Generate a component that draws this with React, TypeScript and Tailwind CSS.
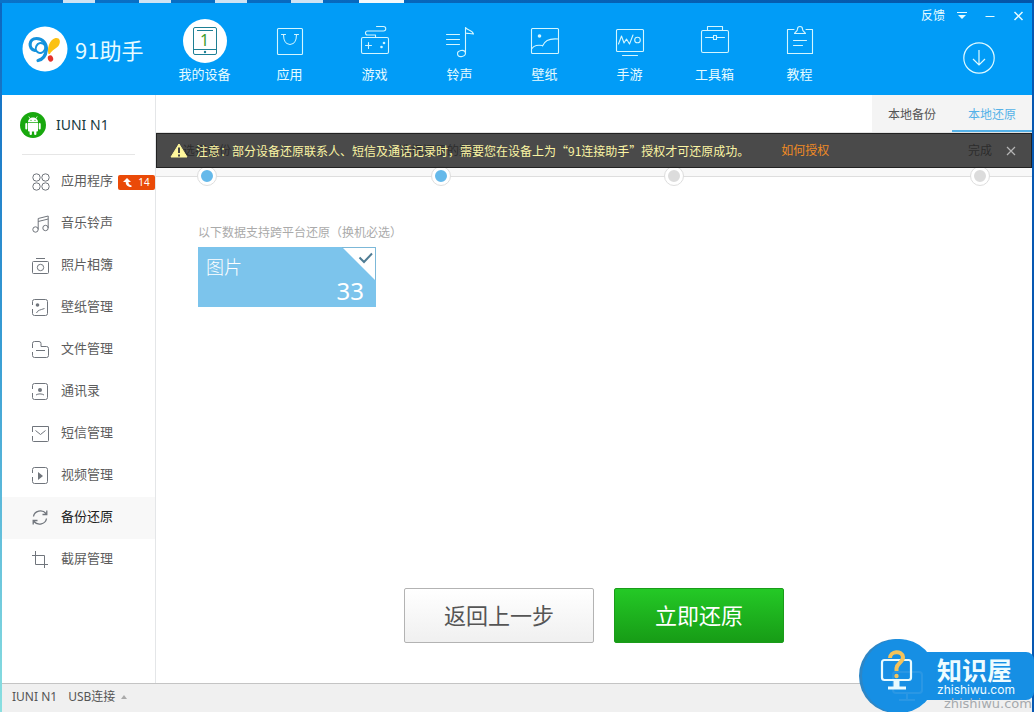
import type { ReactNode } from "react";

function NavSvg({ children }: { children: ReactNode }) {
  return (
    <svg width="44" height="44" viewBox="0 0 44 44" fill="none" stroke="#d4f6ff" strokeWidth="1.1" strokeLinecap="round" strokeLinejoin="round" aria-hidden="true">
      {children}
    </svg>
  );
}

const navItems: { label: string; icon: ReactNode }[] = [
  {
    label: "我的设备",
    icon: (
      <span className="relative flex size-11 items-center justify-center rounded-full bg-white">
        <svg className="absolute inset-0" width="44" height="44" viewBox="0 0 44 44" fill="none" stroke="#1d7f94" aria-hidden="true">
          <rect x="10.5" y="8.5" width="23" height="27" rx="1.5" />
          <path d="M14 11.5h16M10.500 30.500h23" />
          <circle cx="22" cy="33" r="1.200" fill="#1d7f94" stroke="none" />
        </svg>
        <span className="relative -mt-0.5 text-base leading-none text-[#3f9d2c]">1</span>
      </span>
    ),
  },
  {
    label: "应用",
    icon: (
      <NavSvg>
        <rect x="9.500" y="9.500" width="25" height="26" rx="1" />
        <path d="M13.500 15.500h4M26.500 15.500h4M15.500 15.500c0 6 2.500 10 6.500 10s6.500-4 6.500-10" />
      </NavSvg>
    ),
  },
  {
    label: "游戏",
    icon: (
      <NavSvg>
        <rect x="8.500" y="18.500" width="27" height="16" rx="1.500" />
        <path d="M22.500 18v-2h-8a2 2 0 0 1 0-4h16a2 2 0 0 0 0-4.500h-7M12.500 26.500h6M15.500 23.500v6" />
        <g fill="#d4f6ff" stroke="none"><circle cx="28.500" cy="28" r="1.300" /><circle cx="31" cy="24" r="1.300" /></g>
      </NavSvg>
    ),
  },
  {
    label: "铃声",
    icon: (
      <NavSvg>
        <path d="M8.500 15.500h13M8.500 20.500h13M8.500 25.500h13M27.500 34V8.500M27.500 8.500c1.500 3 7 2 8 6.500-3-1-5 0-8-1" />
        <ellipse cx="23.500" cy="34.500" rx="4" ry="3" transform="rotate(-12 23.500 34.500)" />
      </NavSvg>
    ),
  },
  {
    label: "壁纸",
    icon: (
      <NavSvg>
        <rect x="8.500" y="9.500" width="27" height="25" rx="1" />
        <circle cx="16.500" cy="17" r="1.800" fill="#d4f6ff" stroke="none" />
        <path d="M8.500 30c3-4 6-4 11-3.500M19.500 27c2-4.500 5-8 16-7" />
      </NavSvg>
    ),
  },
  {
    label: "手游",
    icon: (
      <NavSvg>
        <rect x="8.500" y="10.500" width="27" height="22" rx="1" />
        <path d="M14.500 36.500h15M10.500 25l3-8 2.500 7 2.500-4 3 5 3.500-9" />
        <circle cx="29.500" cy="21" r="2.800" />
      </NavSvg>
    ),
  },
  {
    label: "工具箱",
    icon: (
      <NavSvg>
        <rect x="8.500" y="11.500" width="27" height="22" rx="1.500" />
        <path d="M14.500 11V7.500h15V11M12.500 18.500h8M23.500 18.500h8" />
        <rect x="20.500" y="16.500" width="3" height="4" />
      </NavSvg>
    ),
  },
  {
    label: "教程",
    icon: (
      <NavSvg>
        <path d="M16 10.500H9.500v24h25v-24H28M15.500 21.500h13M15.500 26.500h9" />
        <path d="M16.500 14.500c1-2 3-2 3-4.500a2.500 2.500 0 1 1 5 0c0 2.500 2 2.500 3 4.500z" />
      </NavSvg>
    ),
  },
];

const sideItems: { label: string; icon: ReactNode; badge?: string; active?: boolean }[] = [
  {
    label: "应用程序",
    badge: "14",
    icon: <><circle cx="4.500" cy="4.500" r="3.700" /><circle cx="13.500" cy="4.500" r="3.700" /><circle cx="4.500" cy="13.500" r="3.700" /><circle cx="13.500" cy="13.500" r="3.700" /></>,
  },
  {
    label: "音乐铃声",
    icon: <><circle cx="3.500" cy="14.500" r="2.700" /><circle cx="13.500" cy="13" r="2.700" /><path d="M6.200 14.500V3.500l10-2.500V13M6.200 6.500l10-2.500" /></>,
  },
  {
    label: "照片相簿",
    icon: <><rect x="0.500" y="4.500" width="16" height="12" rx="1" /><circle cx="8.500" cy="10.500" r="3.200" /><path d="M4 1.500h9" /></>,
  },
  {
    label: "壁纸管理",
    icon: <><path d="M0.500 6V2.500a2 2 0 0 1 2-2h11a2 2 0 0 1 2 2v12a2 2 0 0 1-2 2h-11a2 2 0 0 1-2-2V10M4.500 14c1-3 4-3 8-4.500" /><circle cx="5.500" cy="6" r="1.800" fill="#70757c" stroke="none" /></>,
  },
  {
    label: "文件管理",
    icon: <path d="M0.500 7V2.500a2 2 0 0 1 2-2h4.500a2 2 0 0 1 2 2v3h5.500a2 2 0 0 1 2 2v7a2 2 0 0 1-2 2h-12a2 2 0 0 1-2-2V11M4 9.500h9" />,
  },
  {
    label: "通讯录",
    icon: <><path d="M0.500 6V2.500a2 2 0 0 1 2-2h11a2 2 0 0 1 2 2v12a2 2 0 0 1-2 2h-11a2 2 0 0 1-2-2V10M4 12c2-1.500 6-1.500 8 0" /><circle cx="8" cy="7" r="2" fill="#70757c" stroke="none" /></>,
  },
  {
    label: "短信管理",
    icon: <path d="M0.500 7V1.500h16v14a1 1 0 0 1-1 1h-14a1 1 0 0 1-1-1V11M3.500 5.500l5 4 5-4" />,
  },
  {
    label: "视频管理",
    icon: <><path d="M0.500 6V2.500a2 2 0 0 1 2-2h11a2 2 0 0 1 2 2v12a2 2 0 0 1-2 2h-11a2 2 0 0 1-2-2V10" /><path d="M6 5l5 4-5 4z" fill="#70757c" stroke="none" /></>,
  },
  {
    label: "备份还原",
    active: true,
    icon: <path strokeWidth="1.300" d="M1.500 7.500a7 6.500 0 0 1 12.500-3M14.800 1.500v4h-4.300M14.500 9.500a7 6.500 0 0 1-12.500 3M1.200 15.500v-4h4.300" />,
  },
  {
    label: "截屏管理",
    icon: <path d="M0 4.500h12.500V17M3.500 0v13.500H16" />,
  },
];

const steps = [
  { label: "选择备份", grow: "grow-[216]", done: true },
  { label: "选择还原的数据", grow: "grow-[215]", done: true },
  { label: "", grow: "grow-[288]", done: false },
  { label: "完成", grow: "grow-0", done: false },
];

function Logo() {
  return (
    <svg width="46" height="46" viewBox="0 0 46 46" aria-hidden="true">
      <circle cx="23" cy="23" r="22.500" fill="#fff" />
      <path d="M13 24.500C6 23 6.500 12.500 14.500 12.500c6.500 0 10.500 5.500 9.800 11.500-.6 5.500-3.800 9.500-8.300 10.500" fill="none" stroke="#1492dd" strokeWidth="3.200" strokeLinecap="round" />
      <ellipse cx="18.500" cy="22" rx="4.600" ry="5" transform="rotate(30 18.500 22)" fill="none" stroke="#1492dd" strokeWidth="2" />
      <path d="M26.500 28c-1.500-5 .5-14.500 7-16 4-.8 5.500 3 3.500 7-1.800 3.600-7.500 5-9 9z" fill="#fbc112" />
      <ellipse cx="28.500" cy="32.500" rx="2.600" ry="3.200" transform="rotate(-20 28.500 32.500)" fill="#e5322b" />
    </svg>
  );
}

function Header() {
  return (
    <header className="flex h-[92px] bg-[#019cf7] text-[#e6fbff]">
      <div className="flex w-40 shrink-0 items-center pl-5">
        <Logo />
        <h1 className="pl-[7px] font-['Noto_Sans_CJK_SC',sans-serif] text-[22px] leading-8 font-normal whitespace-nowrap">91助手</h1>
      </div>
      <nav className="flex">
        {navItems.map((item) => (
          <a key={item.label} href="#" className="flex w-[85px] flex-col items-center pt-4">
            {item.icon}
            <span className="pt-px text-[13px] leading-5">{item.label}</span>
          </a>
        ))}
      </nav>
      <div className="ml-auto flex flex-col items-end pr-2">
        <div className="flex h-[26px] items-center gap-3 text-xs">
          <a href="#">反馈</a>
          <button type="button" aria-label="菜单">
            <svg width="10" height="8" viewBox="0 0 10 8" fill="currentColor"><path d="M0 0h10v1H0zM1 3h8L5 7z" /></svg>
          </button>
          <button type="button" aria-label="最小化" className="pl-1.5">
            <svg width="10" height="9" viewBox="0 0 10 9" stroke="currentColor"><path d="M0.500 4.500h9" /></svg>
          </button>
          <button type="button" aria-label="关闭" className="pl-1.5">
            <svg width="11" height="10" viewBox="0 0 11 10" stroke="currentColor" strokeWidth="1.500"><path d="M1.500 1l8 8M9.500 1l-8 8" /></svg>
          </button>
        </div>
        <button type="button" aria-label="下载" className="mt-3 mr-7">
          <svg width="34" height="34" viewBox="0 0 34 34" fill="none" stroke="#e0faff" strokeWidth="1.200">
            <circle cx="17" cy="17" r="15.200" />
            <path d="M17 9v15M11 18l6 6 6-6" />
          </svg>
        </button>
      </div>
    </header>
  );
}

function Sidebar() {
  return (
    <aside className="w-[154px] shrink-0 border-r border-[#e4e6e8]">
      <div className="mx-5 flex h-[60px] items-center gap-2.5 border-b border-[#e6e6e6] whitespace-nowrap">
        <svg className="-ml-0.5 shrink-0" width="26" height="26" viewBox="0 0 26 26" aria-hidden="true">
          <circle cx="13" cy="13" r="13" fill="#18a80e" />
          <g fill="#fff">
            <path d="M8 10.300c0-3 2.300-4.800 5-4.800s5 1.800 5 4.800z" />
            <path d="M8 11h10v7.500a1 1 0 0 1-1 1H9a1 1 0 0 1-1-1z" />
            <rect x="5.300" y="11" width="2" height="6.500" rx="1" />
            <rect x="18.700" y="11" width="2" height="6.500" rx="1" />
            <rect x="9.600" y="17" width="2.300" height="6" rx="1" />
            <rect x="14.100" y="17" width="2.300" height="6" rx="1" />
          </g>
          <path d="M10 6.500L8.800 4.500M16 6.500l1.200-2" stroke="#fff" strokeWidth="0.800" />
          <circle cx="11" cy="8.300" r="0.600" fill="#18a80e" /><circle cx="15" cy="8.300" r="0.600" fill="#18a80e" />
        </svg>
        <span className="text-sm leading-5 text-[#173a40]">IUNI N1</span>
      </div>
      <nav className="pt-1.5">
        {sideItems.map((item) => (
          <a
            key={item.label}
            href="#"
            className={
              item.active
                ? "flex h-[42px] items-center bg-[#f8f8f8] pl-[30px] text-[13px] text-[#222]"
                : "flex h-[42px] items-center pl-[30px] text-[13px] text-[#5c5c5c]"
            }
          >
            <svg className="shrink-0" width="18" height="18" viewBox="0 0 18 18" fill="none" stroke="#70757c" strokeWidth="1" aria-hidden="true">
              {item.icon}
            </svg>
            <span className="pb-1 pl-[11px] leading-5 whitespace-nowrap">{item.label}</span>
            {item.badge && (
              <span className="ml-[5px] flex h-[15px] w-[37px] shrink-0 items-center justify-center gap-1.5 rounded-xs bg-[#ea4a08] text-[10px] leading-none text-white">
                <svg width="9" height="9" viewBox="0 0 9 9" fill="currentColor" aria-hidden="true"><path d="M4 0l4 4H5.500c0 2 .8 3 3 3.500v1.500C5 9 2.700 7.500 2.700 4H0z" /></svg>
                {item.badge}
              </span>
            )}
          </a>
        ))}
      </nav>
    </aside>
  );
}

function Notice() {
  return (
    <div className="absolute inset-x-0 top-0 flex h-[35px] items-center border border-[#222] bg-[#2b2b2b]/85 pr-[15px] pl-[13px] text-xs whitespace-nowrap">
      <svg width="18" height="16" viewBox="0 0 18 16" aria-hidden="true">
        <path d="M9 1l8 13H1z" fill="#fff79c" stroke="#fff79c" strokeLinejoin="round" />
        <path d="M9 4.500v5.500M9 11.500v2" stroke="#444" strokeWidth="2" />
      </svg>
      <p className="pl-2 font-['Noto_Sans_CJK_SC',sans-serif] text-[#fbf5a4]">
        注意：部分设备还原联系人、短信及通话记录时，需要您在设备上为“91连接助手”授权才可还原成功。
      </p>
      <a href="#" className="pl-8 text-[#f08a24]">如何授权</a>
      <button type="button" aria-label="关闭提示" className="ml-auto">
        <svg width="10" height="10" viewBox="0 0 10 10" stroke="#b5b5b5" strokeWidth="1.200"><path d="M1 1l8 8M9 1L1 9" /></svg>
      </button>
    </div>
  );
}

function Steps() {
  return (
    <div className="relative">
      <ol className="flex h-11 items-end border-b border-[#dedede] bg-[#f8f8f8] pr-[43px] pl-[42px]">
        {steps.map((step, i) => (
          <li key={i} className={`flex basis-[18px] flex-col ${step.grow}`}>
            <span className="flex w-[18px] justify-center pb-1.5 text-xs leading-5 whitespace-nowrap text-[#333]">{step.label}</span>
            <span
              className={
                step.done
                  ? "-mb-[9px] size-[18px] rounded-full border-3 border-white bg-[#65b9ea] outline outline-[#dedede]"
                  : "-mb-[9px] size-[18px] rounded-full border-3 border-white bg-[#dcdcdc] outline outline-[#dedede]"
              }
            />
          </li>
        ))}
      </ol>
      <Notice />
    </div>
  );
}

function Main() {
  return (
    <main className="flex min-w-0 grow flex-col">
      <div className="flex h-[38px] justify-end border-b border-[#e2e2e2] text-xs">
        <button type="button" className="w-20 border-b-2 border-[#f4f4f4] bg-[#f4f4f4] pt-1 text-[#555]">本地备份</button>
        <button type="button" className="w-20 border-b-2 border-[#55b2e8] bg-[#f4f4f4] pt-1 text-[#55b2e8]">本地还原</button>
      </div>
      <Steps />
      <section className="px-[42px] pt-[46px]">
        <h2 className="text-xs leading-5 text-[#aaa]">以下数据支持跨平台还原（换机必选）</h2>
        <label className="relative mt-1 flex h-[60px] w-[178px] flex-col justify-between bg-[#7cc4ec] px-2 pt-2 text-white">
          <input type="checkbox" defaultChecked className="absolute size-px appearance-none" />
          <span className="text-lg leading-6 font-light">图片</span>
          <span className="-mt-1 pr-1 text-right text-2xl leading-8">33</span>
          <svg className="absolute top-0 right-0" width="34" height="34" viewBox="0 0 34 34" aria-hidden="true">
            <path d="M1 1h32v32z" fill="#fff" />
            <path d="M0 .5h33.500V33" fill="none" stroke="#7cb8d8" />
            <path d="M17.500 10.500l4.500 4.500 8-8.500" fill="none" stroke="#4f7c94" strokeWidth="2" />
          </svg>
        </label>
      </section>
      <div className="mt-auto flex justify-center gap-5 pt-10 pb-10 text-[22px]">
        <button type="button" className="h-[55px] w-[190px] rounded-xs border border-[#b3b3b3] bg-linear-to-b from-white to-[#f0f0f0] text-[#555]">返回上一步</button>
        <button type="button" className="h-[55px] w-[170px] rounded-xs border border-[#1a9c1a] bg-linear-to-b from-[#24c926] to-[#179c16] text-white">立即还原</button>
      </div>
    </main>
  );
}

function SiteMark() {
  return (
    <div className="absolute right-0 bottom-0 h-[74px] w-[176px] overflow-hidden">
      <div className="absolute top-3.5 right-0 h-12 w-[130px] rounded-r-lg bg-[#168fe4]" />
      <svg className="absolute top-0 left-0" width="82" height="74" viewBox="0 0 82 74" aria-hidden="true">
        <circle cx="38" cy="38" r="37" fill="#2d86c6" />
        <circle cx="41" cy="38" r="37" fill="#168fe4" />
        <g fill="none" stroke="#48a5e6" strokeWidth="2" opacity="0.400"><rect x="35" y="34" width="29" height="21" rx="3" /><path d="M49 55v6M41 62h16" /></g>
        <g fill="none" stroke="#e9fbff" strokeWidth="2.200">
          <rect x="24" y="22" width="29" height="20" rx="2.500" />
          <path d="M38.500 42v7" strokeWidth="6" />
          <path d="M30 50h18" strokeWidth="3" />
        </g>
        <path d="M32 20c0-7 12-8 13-1 .5 5-6 6-6.500 11v3" fill="none" stroke="#f5c35a" strokeWidth="4" />
        <circle cx="38.500" cy="38" r="2.200" fill="#f5c35a" />
      </svg>
      <div className="absolute top-[18px] left-[79px] flex flex-col text-[#edfcff]">
        <span className="text-[25px] leading-7 font-bold whitespace-nowrap">知识屋</span>
        <span className="font-['Inter',sans-serif] text-xs leading-3">zhishiwu.com</span>
      </div>
      <span className="absolute right-0.5 bottom-0 font-['DejaVu_Sans',sans-serif] text-[13px] leading-4 text-[#a5a9ad]">zhishiwu.com</span>
    </div>
  );
}

export default function App() {
  return (
    <div className="relative flex min-h-screen flex-col bg-white font-['Noto_Sans','Noto_Sans_CJK_SC',sans-serif]">
      <div className="flex h-[3px] gap-11 bg-linear-to-r from-[#0a72c8] to-[#0455a8] pl-[63px]" aria-hidden="true">
        <span className="w-8 bg-[#cfe3f3]" />
        <span className="w-8 bg-[#cfe3f3]" />
        <span className="w-8 bg-[#cfe3f3]" />
        <span className="w-8 bg-[#cfe3f3]" />
        <span className="-ml-2 w-[45px] bg-[#f3f9fc]" />
      </div>
      <div className="flex grow">
        <div className="w-0.5 shrink-0 bg-linear-to-b from-[#0b66c0] via-[#3a9fd4] to-[#8adfe0]" />
        <div className="flex min-w-0 grow flex-col">
          <Header />
          <div className="flex grow">
            <Sidebar />
            <Main />
          </div>
          <footer className="flex h-[29px] items-center gap-[11px] border-t border-[#c4c4c4] bg-[#f0f0f0] pb-0.5 pl-2.5 text-xs text-[#555]">
            <span>IUNI N1</span>
            <button type="button" className="flex items-center gap-1.5">
              USB连接
              <svg width="6" height="4" viewBox="0 0 6 4" fill="#aaa" aria-hidden="true"><path d="M0 4l3-4 3 4z" /></svg>
            </button>
          </footer>
        </div>
        <div className="w-0.5 shrink-0 bg-[#0658b2]" />
      </div>
      <SiteMark />
    </div>
  );
}
